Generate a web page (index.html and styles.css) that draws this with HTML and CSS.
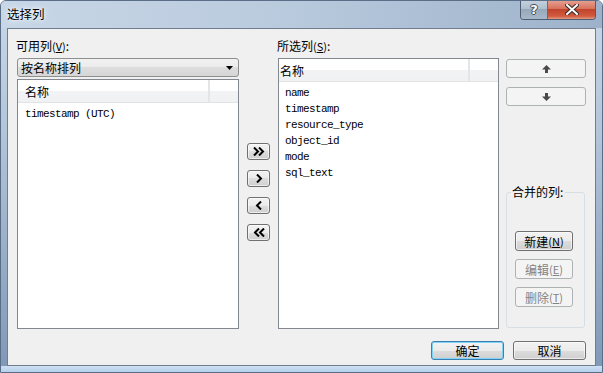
FILE: index.html
```html
<!DOCTYPE html>
<html lang="zh-CN">
<head>
  <meta charset="UTF-8">
  <title>选择列</title>
  <link rel="stylesheet" href="styles.css">
</head>
<body>
  <div class="window">
    <!-- Title bar -->
    <div class="titlebar">
      <span class="title">选择列</span>
      <div class="caption-buttons">
        <span class="cap cap-help">?</span>
        <span class="cap cap-close">
          <svg width="14" height="11" viewBox="0 0 14 11">
            <path d="M2 1 L12 10 M12 1 L2 10" stroke="#3b2a2a" stroke-width="4" stroke-linecap="square"/>
            <path d="M2 1 L12 10 M12 1 L2 10" stroke="#ffffff" stroke-width="2" stroke-linecap="square"/>
          </svg>
        </span>
      </div>
    </div>

    <!-- Client area -->
    <div class="client">
      <div class="main">
        <!-- Available columns -->
        <div class="col col-available">
          <div class="label">可用列<span class="key">(<u>V</u>)</span>:</div>
          <div class="combo">
            <span>按名称排列</span>
            <svg class="combo-arrow" width="7" height="4" viewBox="0 0 7 4"><path d="M0 0 H7 L3.5 4 Z" fill="#000"/></svg>
          </div>
          <div class="listview lv-available">
            <div class="lv-header">
              <div class="hcell hcell-name">名称</div>
              <div class="hcell hcell-rest"></div>
            </div>
            <div class="lv-items">
              <div class="lv-row">timestamp (UTC)</div>
            </div>
          </div>
        </div>

        <!-- Move buttons -->
        <div class="col col-move">
          <button class="btn btn-move">
            <svg width="12" height="9" viewBox="0 0 12 9"><path d="M1 0.5 L5 4.5 L1 8.5 M6 0.5 L10 4.5 L6 8.5" fill="none" stroke="#000" stroke-width="2"/></svg>
          </button>
          <button class="btn btn-move">
            <svg width="12" height="9" viewBox="0 0 12 9"><path d="M4 0.5 L8 4.5 L4 8.5" fill="none" stroke="#000" stroke-width="2"/></svg>
          </button>
          <button class="btn btn-move">
            <svg width="12" height="9" viewBox="0 0 12 9"><path d="M8 0.5 L4 4.5 L8 8.5" fill="none" stroke="#000" stroke-width="2"/></svg>
          </button>
          <button class="btn btn-move">
            <svg width="12" height="9" viewBox="0 0 12 9"><path d="M6 0.5 L2 4.5 L6 8.5 M11 0.5 L7 4.5 L11 8.5" fill="none" stroke="#000" stroke-width="2"/></svg>
          </button>
        </div>

        <!-- Selected columns -->
        <div class="col col-selected">
          <div class="label">所选列<span class="key">(<u>S</u>)</span>:</div>
          <div class="listview lv-selected">
            <div class="lv-header">
              <div class="hcell hcell-name">名称</div>
              <div class="hcell hcell-rest"></div>
            </div>
            <div class="lv-items">
              <div class="lv-row">name</div>
              <div class="lv-row">timestamp</div>
              <div class="lv-row">resource_type</div>
              <div class="lv-row">object_id</div>
              <div class="lv-row">mode</div>
              <div class="lv-row">sql_text</div>
            </div>
          </div>
        </div>

        <!-- Order + merged columns -->
        <div class="col col-side">
          <button class="btn btn-order" disabled>
            <svg width="9" height="8" viewBox="0 0 9 8"><path d="M4.5 0 L9 4.5 H6 V8 H3 V4.5 H0 Z" fill="#4a4a4a"/></svg>
          </button>
          <button class="btn btn-order" disabled>
            <svg width="9" height="8" viewBox="0 0 9 8"><path d="M4.5 8 L9 3.5 H6 V0 H3 V3.5 H0 Z" fill="#4a4a4a"/></svg>
          </button>
          <div class="group">
            <span class="group-label">合并的列:</span>
            <button class="btn btn-group">新建 <span class="key">(<u>N</u>)</span></button>
            <button class="btn btn-group" disabled>编辑 <span class="key">(<u>E</u>)</span></button>
            <button class="btn btn-group" disabled>删除 <span class="key">(<u>T</u>)</span></button>
          </div>
        </div>
      </div>

      <div class="footer">
        <button class="btn btn-dialog btn-default">确定</button>
        <button class="btn btn-dialog">取消</button>
      </div>
    </div>

    <div class="frame-bottom"></div>
  </div>
</body>
</html>
```

FILE: styles.css
```css
* {
  box-sizing: border-box;
}

body {
  margin: 0;
  font-family: "Noto Sans CJK SC", "Liberation Sans", sans-serif;
  font-size: 12px;
  color: #000;
  background: #ffffff;
}

/* Window frame */
.window {
  width: 603px;
  height: 373px;
  display: flex;
  flex-direction: column;
  border: 1px solid #5a6e88;
  border-radius: 6px 6px 0 0;
  background: linear-gradient(180deg, #cad8e7 0%, #b3c5d9 35%, #8ea6c1 80%, #7f98b6 100%);
  overflow: hidden;
}

.titlebar {
  height: 27px;
  display: flex;
  align-items: flex-start;
  padding-left: 6px;
  background: linear-gradient(90deg, #c8d7e7 0%, #bacbde 45%, #9db2ca 100%);
}

.title {
  margin-top: 5px;
  font-size: 12.5px;
  line-height: 16px;
  text-shadow: 0 0 6px #ffffff, 0 0 3px #ffffff;
}

.caption-buttons {
  margin-left: auto;
  margin-right: 6px;
  margin-top: -1px;
  display: flex;
  border: 1px solid #4d5e73;
  border-top: none;
  border-radius: 0 0 4px 4px;
  overflow: hidden;
}

.cap {
  height: 19px;
  display: flex;
  align-items: center;
  justify-content: center;
}

.cap-help {
  width: 27px;
  border-right: 1px solid #5d6d80;
  background: linear-gradient(180deg, #c6d2df 0%, #aebdcd 50%, #97a8bb 50%, #a7b8ca 100%);
  color: #ffffff;
  font-family: "DejaVu Sans", sans-serif;
  font-weight: bold;
  font-size: 13px;
  text-shadow: -1px 0 #3e4a58, 1px 0 #3e4a58, 0 -1px #3e4a58, 0 1px #3e4a58;
}

.cap-close {
  width: 47px;
  background: linear-gradient(180deg, #e8a394 0%, #d7735f 45%, #c1442c 50%, #d25a3f 85%, #e59a80 100%);
}

/* Client area */
.client {
  height: 338px;
  margin: 0 6px;
  border: 1px solid #6f7d8d;
  background: #f0f0f0;
  padding: 9px 9px 5px 9px;
  display: flex;
  flex-direction: column;
}

.frame-bottom {
  flex: 1;
  margin: 0 -1px;
  background: linear-gradient(180deg, #cfe0f2 0%, #b6d0ec 100%);
}

.main {
  height: 291px;
  display: flex;
}

.col {
  display: flex;
  flex-direction: column;
}

.col-available {
  width: 222px;
}

.col-move {
  width: 23px;
  margin-left: 8px;
  padding-top: 105px;
  gap: 10px;
}

.col-selected {
  width: 221px;
  margin-left: 8px;
}

.col-side {
  width: 80px;
  margin-left: 7px;
  padding-top: 21px;
}

.label {
  height: 20px;
  line-height: 16px;
  padding-left: 0;
  margin-left: -1px;
}

.key {
  font-size: 11px;
}

/* Combo box */
.combo {
  height: 19px;
  margin-bottom: 2px;
  display: flex;
  align-items: center;
  padding: 0 5px 0 3px;
  border: 1px solid #8e8f8f;
  border-radius: 3px;
  background: linear-gradient(180deg, #f2f2f2 0%, #ebebeb 50%, #dddddd 50%, #d6d6d6 100%);
}

.combo-arrow {
  margin-left: auto;
}

/* List views */
.listview {
  flex: 1;
  border: 1px solid #828790;
  background: #ffffff;
}

.lv-header {
  height: 23px;
  display: flex;
  border-bottom: 1px solid #e2e3e5;
}

.hcell {
  height: 22px;
  line-height: 22px;
  padding-top: 1px;
  background: linear-gradient(180deg, #ffffff 0%, #ffffff 50%, #f2f3f5 50%, #f0f1f3 100%);
}

.hcell-name {
  border-right: 2px solid #e4e5e7;
}

.lv-available .hcell-name {
  width: 192px;
  padding-left: 7px;
}

.lv-selected .hcell-name {
  width: 191px;
  padding-left: 1px;
}

.hcell-rest {
  flex: 1;
}

.lv-items {
  padding-top: 3px;
}

.lv-row {
  height: 16px;
  line-height: 16px;
  font-family: "Liberation Mono", monospace;
  font-size: 11px;
  letter-spacing: -0.6px;
  white-space: pre;
}

.lv-available .lv-row {
  padding-left: 7px;
}

.lv-selected .lv-row {
  padding-left: 6px;
}

/* Buttons */
.btn {
  margin: 0;
  padding: 0;
  font: inherit;
  color: #000;
  display: flex;
  align-items: center;
  justify-content: center;
  border: 1px solid #707070;
  border-radius: 3px;
  background: linear-gradient(180deg, #f2f2f2 0%, #ebebeb 50%, #dddddd 50%, #cfcfcf 100%);
  box-shadow: inset 0 0 0 1px rgba(255, 255, 255, 0.6);
}

.btn:disabled {
  color: #838383;
  border-color: #adb2b5;
  background: #f4f4f4;
  box-shadow: none;
}

.btn-move {
  width: 23px;
  height: 17px;
}

.btn-order {
  width: 80px;
  height: 19px;
  margin-bottom: 9px;
}

.btn-order:disabled svg path {
  fill: #4a4a4a;
}

.group {
  position: relative;
  height: 136px;
  margin-top: 77px;
  width: 79px;
  border: 1px solid #d5dfe5;
  border-radius: 3px;
  padding: 38px 0 0 8px;
  display: flex;
  flex-direction: column;
  gap: 8px;
}

.group-label {
  position: absolute;
  top: -9px;
  left: 4px;
  padding: 0 2px 0 1px;
  line-height: 16px;
  background: #f0f0f0;
}

.btn-group {
  width: 58px;
  height: 20px;
}

.footer {
  margin-top: 12px;
  display: flex;
  justify-content: flex-end;
  gap: 9px;
}

.btn-dialog {
  width: 73px;
  height: 19px;
}

.btn-default {
  border-color: #3c7fb1;
  box-shadow: inset 0 0 0 1px #7fd3f6;
}
```
